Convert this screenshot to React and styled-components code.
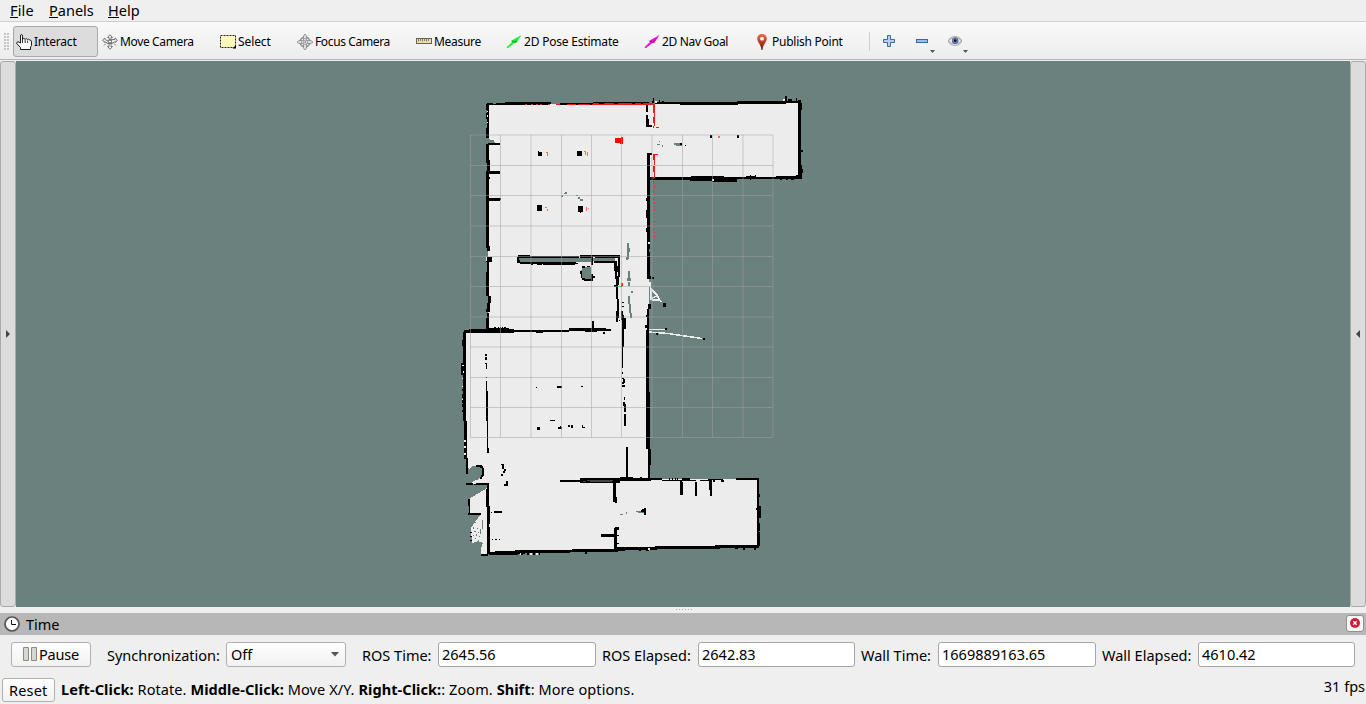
import React from "react";
import styled, { createGlobalStyle } from "styled-components";

const GlobalStyle = createGlobalStyle`
  * { box-sizing: border-box; }
  body { margin: 0; background: #efefef; overflow: hidden; }
`;

const Window = styled.div`
  display: flex;
  flex-direction: column;
  width: 1366px;
  height: 704px;
  background: #efefef;
  color: #000;
  font-family: "Noto Sans", "Open Sans", sans-serif;
  font-size: 14.5px;
  line-height: 20px;
  white-space: nowrap;
`;

const Label = styled.span`
  letter-spacing: ${(p) => p.$track || 0}px;
`;

const MenuBar = styled.nav`
  display: flex;
  height: 22px;
  padding: 0 0 0 10px;
  border-bottom: 1px solid #d0d0d0;
`;
const MenuItem = styled.div`
  width: ${(p) => p.$width}px;
  letter-spacing: ${(p) => p.$track || 0}px;
`;
const Mnemonic = styled.span`
  display: inline-block;
  height: 18px;
  line-height: 20px;
  border-bottom: 1px solid #000;
`;

const ToolBar = styled.div`
  display: flex;
  align-items: flex-start;
  height: 38px;
  padding: 4px 0 0 4px;
  background: linear-gradient(#f9f9f9, #ededed);
  border-bottom: 1px solid #b4b4b4;
  font-size: 12px;
`;
const Grip = styled.div`
  width: 9px;
  height: 17px;
  margin-top: 7px;
  background: radial-gradient(circle at 1px 1px, #c4c4c4 0.7px, transparent 1px) 0 0 / 3px 3px;
  background-clip: content-box;
  padding-right: 4px;
`;
const Tool = styled.button`
  display: flex;
  align-items: center;
  gap: 2px;
  width: ${(p) => p.$width}px;
  height: 31px;
  padding: 0 0 0 ${(p) => (p.$active ? 2 : 3)}px;
  border: 1px solid ${(p) => (p.$active ? "#a9a9a9" : "transparent")};
  border-radius: 3px;
  background: ${(p) => (p.$active ? "#dcdcdc" : "transparent")};
  color: #000;
  font: inherit;
`;
const Separator = styled.div`
  width: 1px;
  height: 19px;
  margin: 6px 11px 0 0;
  background: #cfcfcf;
`;
const IconTool = styled.div`
  width: 33px;
  height: 31px;
  padding-top: 7px;
  svg { display: block; }
`;

const Workspace = styled.main`
  display: flex;
  height: 547px;
  padding-top: 1px;
`;
const SidePanel = styled.div`
  display: flex;
  align-items: center;
  justify-content: center;
  width: 16px;
  border: 1px solid #aaa;
  border-radius: 3px;
  background: #dcdcdc;
`;
const Viewport = styled.div`
  width: 1334px;
  height: 546px;
  background: #6a817d;
  svg { display: block; }
`;

const Splitter = styled.div`
  display: flex;
  justify-content: center;
  gap: 2px;
  height: 6px;
  padding: 2px 0 0 2px;
`;
const Dot = styled.i`
  width: 1px;
  height: 1px;
  background: #aaa;
`;

const PanelTitle = styled.header`
  display: flex;
  align-items: center;
  height: 22px;
  padding: 0 2px 0 4px;
  background: #b7b7b7;
  gap: 6px;
`;
const CloseButton = styled.button`
  display: flex;
  align-items: center;
  justify-content: center;
  width: 18px;
  height: 17px;
  margin: 0 0 2px auto;
  padding: 0;
  border: 1px solid #8f8f8f;
  border-radius: 3px;
  background: #f8f8f8;
`;

const TimeRow = styled.section`
  display: flex;
  height: 43px;
  padding: 7px 0 0 11px;
`;
const PushButton = styled.button`
  display: flex;
  align-items: center;
  width: ${(p) => p.$width}px;
  height: ${(p) => p.$height || 25}px;
  padding: 0 0 1px ${(p) => p.$inset}px;
  border: 1px solid #b0b0b0;
  border-radius: 3px;
  background: linear-gradient(#fefefe, #f2f2f2);
  color: #000;
  font: inherit;
`;
const FieldLabel = styled.label`
  width: ${(p) => p.$width}px;
  padding: 3px 0 0 ${(p) => p.$gap}px;
  letter-spacing: ${(p) => p.$track || 0}px;
`;
const Select = styled.div`
  display: flex;
  align-items: center;
  justify-content: space-between;
  width: 120px;
  height: 25px;
  padding: 0 6px 1px 4px;
  border: 1px solid #b0b0b0;
  border-radius: 3px;
  background: linear-gradient(#fefefe, #f2f2f2);
`;
const Field = styled.div`
  width: ${(p) => p.$width}px;
  height: 25px;
  padding: 1px 0 0 3px;
  border: 1px solid #a6a6a6;
  border-radius: 3px;
  background: #fff;
`;
const StatusBar = styled.footer`
  display: flex;
  height: 26px;
  padding: 0 1px 0 2px;
`;
const Hint = styled.div`
  padding: 1px 0 0 6px;
  letter-spacing: 0.08px;
`;
const Fps = styled.div`
  margin: -2px 0 0 auto;
`;

/* ---------- occupancy map ---------- */

/* Turns "x y w h; x y w h" into one path made of rectangles. */
const rects = (list) =>
  list
    .split(";")
    .map((s) => s.trim())
    .filter(Boolean)
    .map((s) => {
      const [x, y, w, h] = s.split(/\s+/);
      return `M${x} ${y}h${w}v${h}h-${w}z`;
    })
    .join("");

const WALLS = rects(`
  487 103 6 2; 493 104 3 1; 496 103 10 2; 505 102 43 3; 546 102 5 2; 560 103 33 2; 593 102 56 2;
  486 104 3 6; 487 110 2 11; 486 113 3 6; 487 121 2 9; 486 128 3 10;
  486 144 3 19; 488 143 12 2; 487 160 3 11; 486 171 3 29; 488 171 12 3; 488 177 2 2; 489 198 11 3; 495 198 6 2;
  486 200 3 48; 487 246 3 5; 486 257 6 5; 487 262 2 10; 486 272 3 24; 488 296 3 7; 487 303 3 6; 486 309 4 3; 487 313 2 8; 486 318 3 11; 486 328 23 3;
  494 327 2 2; 498 327 1 2; 500 327 1 2; 502 327 1 2; 504 327 2 2;
  646 105 2 7; 646 115 2 5; 646 119 3 7; 646 125 6 2;
  647 153 5 2; 647 153 3 70; 648 177 9 3; 646 198 2 3; 646 210 2 4; 646 214 3 4; 647 221 3 28; 646 228 2 4; 647 248 2 28; 648 252 2 24; 647 276 4 3; 652 277 2 2;
  648 304 3 5; 647 309 2 27; 646 315 2 2; 645 325 2 3; 646 330 3 62; 646 392 4 57; 648 449 3 16; 648 465 2 14;
  653 98 1 4; 652 101 2 2; 659 100 1 4; 655 102 25 2; 662 101 2 2; 680 102 58 3; 684 103 54 2; 737 101 49 3; 762 101 38 2;
  783 101 6 2; 785 96 2 6; 788 99 4 3; 791 100 1 2; 796 98 1 5; 798 100 3 4; 798 102 3 75; 801 103 1 7; 801 150 2 2; 801 169 2 4; 799 165 3 13;
  650 177 150 2; 655 178 80 2; 691 176 33 2; 690 179 18 2; 697 178 40 3; 712 180 25 2; 746 176 9 3; 750 175 1 5; 755 175 1 4; 776 176 21 3; 780 178 2 2; 786 178 2 2; 791 177 3 3; 796 175 6 4;
  518 255 12 3; 530 256 49 2; 580 255 40 2; 580 257 12 1; 517 257 2 4; 517 260 3 3; 520 262 12 2; 532 262 44 2; 531 264 2 1; 537 263 5 2; 543 263 32 2; 575 263 3 1; 591 257 2 8; 594 261 21 2; 595 256 25 2;
  618 257 2 20; 614 261 3 10; 615 270 2 9; 616 276 3 9; 614 285 4 2; 616 287 2 12; 617 266 2 6; 617 299 2 12; 616 311 3 7; 616 318 2 4; 619 320 1 1;
  582 266 3 2; 580 271 2 3; 581 274 1 4; 582 278 3 2; 584 279 9 2; 591 274 2 5; 593 276 2 2; 592 258 1 7; 587 266 3 1;
  622 302 2 1; 622 306 2 1; 621 311 2 9; 622 315 2 22; 624 318 2 11; 624 327 1 1; 622 335 2 12; 622 347 1 20;
  464 330 50 3; 469 329 45 2; 513 330 56 2; 569 328 37 3; 585 329 12 3; 592 321 2 8; 597 328 6 2; 603 329 8 2; 603 332 2 2; 536 331 5 2; 541 332 2 1; 550 331 2 1;
  463 332 3 48; 462 340 2 6; 465 331 2 2; 461 363 3 12; 463 380 2 9; 462 389 2 2; 462 394 2 4; 462 399 2 4; 463 375 3 46; 462 404 2 3; 462 410 2 2;
  464 421 2 37; 465 421 2 37; 464 451 2 8; 466 458 2 10; 466 467 2 7;
  485 354 2 2; 485 357 2 3; 485 363 2 1; 486 364 1 5; 486 377 1 1; 486 381 1 40; 487 391 1 60; 487 448 2 5;
  622 367 1 1; 622 372 1 2; 622 378 2 1; 623 379 2 4; 622 382 2 2; 622 385 3 2; 624 397 1 3; 623 402 2 4; 624 404 2 8; 624 414 2 12; 626 447 2 31;
  536 387 1 1; 557 386 5 2; 581 386 2 1; 550 420 5 1; 537 427 3 3; 558 427 4 2; 560 426 1 1; 568 425 2 2; 571 425 2 3; 582 425 1 3; 583 427 2 1;
  538 151 1 2; 538 152 4 4; 577 151 5 5; 537 205 5 6; 578 206 5 6; 580 211 1 2;
  710 135 2 3; 737 135 2 3; 680 143 2 2; 685 145 1 1; 663 303 3 4; 656 333 2 2; 665 328 2 2; 703 338 2 2;
  476 465 6 2; 480 466 3 2; 482 468 2 8; 481 475 2 2; 480 477 2 2; 466 483 7 2; 474 484 5 1; 476 483 13 2;
  501 464 3 1; 502 465 2 4; 504 469 2 2; 503 471 2 2; 501 474 2 2; 506 481 2 4; 504 484 4 2; 494 511 8 2;
  487 484 2 5; 486 489 3 18; 487 506 3 18; 488 508 2 12; 487 524 2 17; 487 527 3 27; 481 554 7 2;
  492 539 1 1; 495 539 2 1; 499 539 1 1; 491 512 1 1;
  468 499 2 7; 469 505 1 8; 468 513 13 2; 470 532 2 1; 470 536 2 1; 470 540 2 1;
  560 480 20 2; 580 478 40 5; 620 477 13 3; 618 478 33 3; 640 477 2 2; 651 478 11 2; 662 480 18 1; 669 478 1 2; 672 478 1 2; 675 478 1 2; 677 478 1 2; 680 480 2 2; 682 478 8 2; 680 480 16 1; 700 480 12 1; 708 479 15 1; 721 480 3 2; 736 478 22 2;
  613 481 3 21; 615 497 2 6; 680 482 3 13; 695 482 2 14; 709 481 3 9; 710 488 2 8; 713 480 2 2; 721 481 3 1;
  757 478 2 70; 758 494 2 3; 757 490 2 5; 758 506 3 12; 756 508 2 2; 758 523 2 3; 758 526 2 5; 758 532 2 14;
  641 510 4 2; 644 508 2 7; 642 509 3 1; 601 534 14 3; 614 528 3 22; 615 527 4 3; 617 535 2 1; 617 543 2 1;
  489 552 27 3; 495 551 30 3; 515 550 55 3; 550 550 68 2; 572 549 53 2; 502 553 2 2; 505 553 2 2; 510 553 2 2; 516 553 2 2; 521 553 2 2; 527 553 2 2; 533 553 2 2; 539 553 1 2; 585 551 2 3; 616 547 41 3; 645 547 75 2; 655 546 60 3; 715 545 43 3; 735 546 3 3; 639 549 2 2; 646 549 3 2; 743 547 2 3; 754 547 2 3
`);

const FREE_SPECKS = rects(`
  655 101 2 2; 783 99 2 2; 712 179 2 2; 648 242 2 2; 487 111 1 1; 487 115 1 2; 487 122 1 1; 486 257 1 4;
  462 365 2 1; 463 371 1 2; 462 378 1 1; 462 386 1 1; 462 399 1 1; 464 440 2 2; 464 446 2 2; 464 453 2 2;
  520 553 1 2; 530 553 2 2; 536 553 2 2; 648 548 2 2; 649 282 2 5; 650 286 1 14; 651 288 1 12
`);

const UNKNOWN = rects(`
  519 258 72 4; 593 258 22 3; 582 268 9 10; 585 267 6 12; 581 270 2 5;
  561 196 2 1; 565 192 2 2; 564 193 2 1; 576 195 2 1; 578 197 2 2; 580 199 3 2; 562 195 1 1;
  627 243 2 7; 627 249 2 10; 626 257 2 3; 629 248 1 4; 628 271 2 7; 627 278 3 3; 629 278 2 3; 628 282 2 4; 631 291 2 2; 628 296 2 8; 629 304 2 9; 630 313 2 5;
  657 144 3 1; 659 141 1 1; 662 145 1 2; 674 143 6 2; 676 144 6 2;
  620 514 3 1; 626 512 1 2; 636 511 6 1; 638 511 6 2
`);

const SCAN = rects(`
  556 104 4 1; 567 104 9 1; 578 104 12 1; 593 103 6 1; 592 104 62 1; 604 103 10 1; 618 103 14 1; 635 103 6 1; 643 103 10 1;
  653 104 2 9; 654 112 1 5; 653 117 2 6; 654 123 1 3; 653 126 1 2; 656 127 3 1;
  653 154 5 1; 653 155 2 5; 654 160 1 5; 653 166 2 6; 654 172 1 6; 653 177 1 2
`);
const SCAN_DIM = rects(`
  525 104 2 1; 531 104 2 1; 536 104 2 1; 540 104 2 1; 548 104 2 1; 653 181 1 3; 654 185 1 3; 653 190 1 3; 654 194 1 2; 653 198 1 2; 654 202 1 2; 653 206 1 1; 654 209 1 2; 653 213 1 1; 654 217 1 1; 653 221 2 1; 654 225 1 1; 653 229 1 2; 654 232 1 1; 653 236 2 1
`);
const SCAN_FAINT = rects(`
  546 152 2 1; 547 153 1 3; 584 151 2 1; 585 152 1 3; 587 152 1 4; 545 207 2 1; 547 209 1 2; 586 207 1 4; 588 208 1 1; 718 136 2 2
`);

const GRID_X = [470.5, 500.5, 531, 561.5, 591.5, 621.5, 652, 682.5, 712.5, 743, 773];
const GRID_Y = [135, 165.5, 195.5, 226, 256.5, 286.5, 317, 347, 377.5, 407.5, 437.5];

function OccupancyMap() {
  return (
    <svg width="1334" height="546" viewBox="16 61 1334 546">
      <g shapeRendering="crispEdges">
        <path
          fill="#ececec"
          d="M488 104L648 104L737 103L799 102V178H649V479H758V547L616 549L488 554H481V548L483 543L478 541L472 543L471 528L480 515H469V499L487 488V484H469L481 477L482 468L475 466L467 473L466 420L465 332L488 330V144L495 143L488 138Z"
        />
        <path fill="#6a817d" d="M488 139h2v1h4v2h1v2h-7zM467 467l2 2 3-3h5l4 3 1 6-3 4-6 2-6 1z" />
        <path d={UNKNOWN} fill="#6a817d" />
        <path
          fill="#6a817d"
          d="M475 522h1v1h-1zM473 527h1v2h-1zM477 528h1v1h-1zM474 531h2v1h-2zM478 532h1v1h-1zM473 535h1v1h-1zM476 534h1v2h-1zM479 536h1v1h-1zM475 538h1v1h-1zM478 540h1v1h-1zM482 520h1v9h-1zM480 529h1v5h-1z"
        />
        <path d={WALLS} fill="#000" />
        <path d={rects("587 480 26 1; 583 481 3 1; 590 481 22 1")} fill="#454545" />
        <path d={FREE_SPECKS} fill="#ececec" />
        <g stroke="#ececec" fill="none">
          <path d="M651 289L657 295L661 302M652 300H659M652 298L657 296M656 296L660 299" strokeWidth="1.500" />
          <path d="M649 329.500H665M649 332L668 333.500L702 338.500" strokeWidth="1.500" />
        </g>
        <path d={SCAN_FAINT} fill="#f86a6a" />
        <path d={SCAN_DIM} fill="#cf3b3b" />
        <path d={SCAN} fill="#f01818" />
        <path d="M615 138h4l4-1v7h-3v-1h-5z" fill="#ff0000" />
        <path d="M621 283h2v3h-2z" fill="#ff2020" />
        <path d="M618 286h3v1h-3z" fill="#00ff00" />
        <path d="M621 285h1v2h-1z" fill="#0000ff" />
      </g>
      <g stroke="#a0a0a4" strokeOpacity="0.5" strokeWidth="1" fill="none">
        {GRID_X.map((x) => (
          <path key={x} d={`M${x} 135V437.5`} />
        ))}
        {GRID_Y.map((y) => (
          <path key={y} d={`M470.5 ${y}H773`} />
        ))}
      </g>
    </svg>
  );
}

/* ---------- icons ---------- */

const Icon = ({ children, w = 16, h = 16 }) => (
  <svg width={w} height={h} viewBox={`0 0 ${w} ${h}`} fill="none">
    {children}
  </svg>
);

const HandIcon = () => (
  <Icon>
    <path
      d="M4.500 9V2Q4.500.500 5.500.500T6.500 2V5Q8 3.800 9 5.300Q10.500 4 11.500 5.500Q13 4.500 13.700 6Q15.500 5.800 15.500 8V11.500L14.500 13V15.500H4.500V13.500L.7 9.500Q.5 7.200 3 8Z"
      fill="#fff"
      stroke="#1c1c1c"
    />
    <path d="M6.500 5V9M9.200 6V9M11.600 6.500V9" stroke="#1c1c1c" strokeWidth=".9" />
  </Icon>
);
const MoveIcon = () => (
  <Icon>
    <path d="M8 .7L10.500 3.500H9V5.500H7V3.500H5.500ZM8 15.300L5.500 12.500H7V9.500H9V12.500H10.500ZM.5 6L3 4V5.500L6 7L10 5.500L13 5.500V4L15.500 6L13.500 8.500V7.300L10 9.500H6L2.500 7.500V8.500Z" fill="#f3f3f3" stroke="#777" />
    <path d="M2 11.500L4 9.500M14 11.500L12 9.500M5.500 7L10.500 9M10.500 6L5.500 9.500" stroke="#777" />
    <circle cx="8" cy="7.500" r="1.500" fill="#fff" stroke="#666" />
  </Icon>
);
const SelectIcon = () => (
  <Icon>
    <rect x=".5" y="1.500" width="15" height="12" fill="#fdf6bd" stroke="#222" strokeDasharray="2 1" />
    <path d="M16 11V14.500H12.500Z" fill="#000" />
  </Icon>
);
const FocusIcon = () => (
  <Icon>
    <circle cx="8" cy="8" r="5" fill="#eee" stroke="#888" strokeWidth="1.300" />
    <path d="M8 0L9.500 2V6.500H14L16 8L14 9.500H9.500V14L8 16L6.500 14V9.500H2L0 8L2 6.500H6.500V2Z" fill="#ddd" stroke="#888" strokeWidth=".8" />
    <path d="M8 4V12M4 8H12" stroke="#777" strokeDasharray="1 1" />
  </Icon>
);
const RulerIcon = () => (
  <Icon>
    <rect x=".5" y="4.500" width="15" height="5" fill="#ece0aa" stroke="#66645a" />
    <path d="M2.500 5V7.500M4.500 5V7M6.500 5V7.500M8.500 5V7M10.500 5V7.500M12.500 5V7" stroke="#66645a" strokeWidth=".8" />
  </Icon>
);
const ArrowIcon = ({ color, shade }) => (
  <Icon>
    <path d="M.3 13.500L5.800 8.300L5.300 6.800L15.500.900L10.500 8.500L8 9.300L2 13.900Z" fill={color} />
    <path d="M5.600 6.800L9 7L8 9.300L10.200 8.500L11.500 6L6.300 8.300Z" fill={shade} />
  </Icon>
);
const PinIcon = () => (
  <Icon>
    <defs>
      <linearGradient id="pin" x2="0" y2="1">
        <stop stopColor="#ec6a45" />
        <stop offset=".6" stopColor="#a83a20" />
        <stop offset="1" stopColor="#502010" />
      </linearGradient>
    </defs>
    <path d="M8 0C5 0 3.200 2 3.200 4.700C3.200 8 7 10 7.500 16H8.500C9 10 12.800 8 12.800 4.700C12.800 2 11 0 8 0Z" fill="url(#pin)" />
    <circle cx="8" cy="4.700" r="1.900" fill="#fff" />
  </Icon>
);
const DropMark = <path d="M16 17H21L18.500 20Z" fill="#555" />;
const PlusIcon = () => (
  <Icon w={22} h={21}>
    <path d="M6.500 2.500H9.500V6.500H13.500V9.500H9.500V13.500H6.500V9.500H2.500V6.500H6.500Z" fill="#b5d0ef" stroke="#356bab" />
  </Icon>
);
const MinusIcon = () => (
  <Icon w={22} h={21}>
    <rect x="2.500" y="6.500" width="11" height="3" fill="#9fc0e6" stroke="#356bab" />
    {DropMark}
  </Icon>
);
const EyeIcon = () => (
  <Icon w={22} h={21}>
    <ellipse cx="8" cy="8" rx="6.500" ry="4.500" fill="#d8d8d8" stroke="#b3b3b3" />
    <path d="M1 8Q8 1.500 15 8Q8 13 1 8Z" fill="#f3f3f3" stroke="#999" strokeWidth=".8" />
    <circle cx="8.200" cy="7.700" r="2.900" fill="#7189c0" stroke="#51659d" />
    <circle cx="8.200" cy="7.700" r="1.400" fill="#101018" />
    {DropMark}
  </Icon>
);

const TOOLS = [
  { name: "Interact", icon: <HandIcon />, width: 85, track: -0.2, active: true },
  { name: "Move Camera", icon: <MoveIcon />, width: 118, track: -0.36 },
  { name: "Select", icon: <SelectIcon />, width: 77, track: -0.1 },
  { name: "Focus Camera", icon: <FocusIcon />, width: 119, track: -0.36 },
  { name: "Measure", icon: <RulerIcon />, width: 90, track: -0.3 },
  { name: "2D Pose Estimate", icon: <ArrowIcon color="#12f32c" shade="#13a52a" />, width: 138, track: -0.2 },
  { name: "2D Nav Goal", icon: <ArrowIcon color="#fb07d4" shade="#b10c97" />, width: 110, track: -0.32 },
  { name: "Publish Point", icon: <PinIcon />, width: 119, track: -0.25 },
];

const READOUTS = [
  { label: "ROS Time:", value: "2645.56", labelWidth: 92, gap: 16, width: 158 },
  { label: "ROS Elapsed:", value: "2642.83", labelWidth: 102, gap: 6, width: 157 },
  { label: "Wall Time:", value: "1669889163.65", labelWidth: 83, gap: 6, width: 158 },
  { label: "Wall Elapsed:", value: "4610.42", labelWidth: 102, gap: 6, width: 157 },
];

export default function App() {
  return (
    <Window>
      <GlobalStyle />
      <MenuBar>
        <MenuItem $width={39} $track={0.15}><Mnemonic>F</Mnemonic>ile</MenuItem>
        <MenuItem $width={59}><Mnemonic>P</Mnemonic>anels</MenuItem>
        <MenuItem $width={40}><Mnemonic>H</Mnemonic>elp</MenuItem>
      </MenuBar>
      <ToolBar>
        <Grip />
        {TOOLS.map((t) => (
          <Tool key={t.name} $width={t.width} $active={t.active}>
            {t.icon}
            <Label $track={t.track}>{t.name}</Label>
          </Tool>
        ))}
        <Separator />
        <IconTool><PlusIcon /></IconTool>
        <IconTool><MinusIcon /></IconTool>
        <IconTool><EyeIcon /></IconTool>
      </ToolBar>
      <Workspace>
        <SidePanel>
          <svg width="4" height="8" viewBox="0 0 4 8"><path d="M0 0L4 4L0 8Z" fill="#444" /></svg>
        </SidePanel>
        <Viewport><OccupancyMap /></Viewport>
        <SidePanel>
          <svg width="4" height="8" viewBox="0 0 4 8"><path d="M4 0L0 4L4 8Z" fill="#444" /></svg>
        </SidePanel>
      </Workspace>
      <Splitter>{[0, 1, 2, 3, 4, 5].map((i) => <Dot key={i} />)}</Splitter>
      <PanelTitle>
        <svg width="16" height="16" viewBox="0 0 16 16">
          <circle cx="8" cy="8" r="7" fill="#fff" stroke="#555" strokeWidth="1.700" />
          <path d="M7.500 4V8.500H12" fill="none" stroke="#111" />
        </svg>
        <Label>Time</Label>
        <CloseButton>
          <svg width="12" height="12" viewBox="0 0 12 12">
            <circle cx="6" cy="6" r="5" fill="#cc1f38" />
            <path d="M4.300 4.300L7.700 7.700M7.700 4.300L4.300 7.700" stroke="#fff" strokeWidth="1.300" />
          </svg>
        </CloseButton>
      </PanelTitle>
      <TimeRow>
        <PushButton $width={80} $inset={11}>
          <svg width="16" height="16" viewBox="0 0 16 16">
            <path d="M.5 1.500h5v13h-5zM8.500 1.500h5v13h-5z" fill="#d5d7d1" stroke="#888a85" />
          </svg>
          <Label $track={-0.2}>Pause</Label>
        </PushButton>
        <FieldLabel $width={135} $gap={16}>Synchronization:</FieldLabel>
        <Select>
          <Label>Off</Label>
          <svg width="8" height="5" viewBox="0 0 8 5"><path d="M0 0H8L4 4.500Z" fill="#555" /></svg>
        </Select>
        {READOUTS.map((r) => (
          <React.Fragment key={r.label}>
            <FieldLabel $width={r.labelWidth} $gap={r.gap}>{r.label}</FieldLabel>
            <Field $width={r.width}>{r.value}</Field>
          </React.Fragment>
        ))}
      </TimeRow>
      <StatusBar>
        <PushButton $width={53} $height={24} $inset={6}><Label $track={0.2}>Reset</Label></PushButton>
        <Hint>
          <b>Left-Click:</b> Rotate. <b>Middle-Click:</b> Move X/Y. <b>Right-Click:</b>: Zoom. <b>Shift</b>: More options.
        </Hint>
        <Fps>31 fps</Fps>
      </StatusBar>
    </Window>
  );
}
